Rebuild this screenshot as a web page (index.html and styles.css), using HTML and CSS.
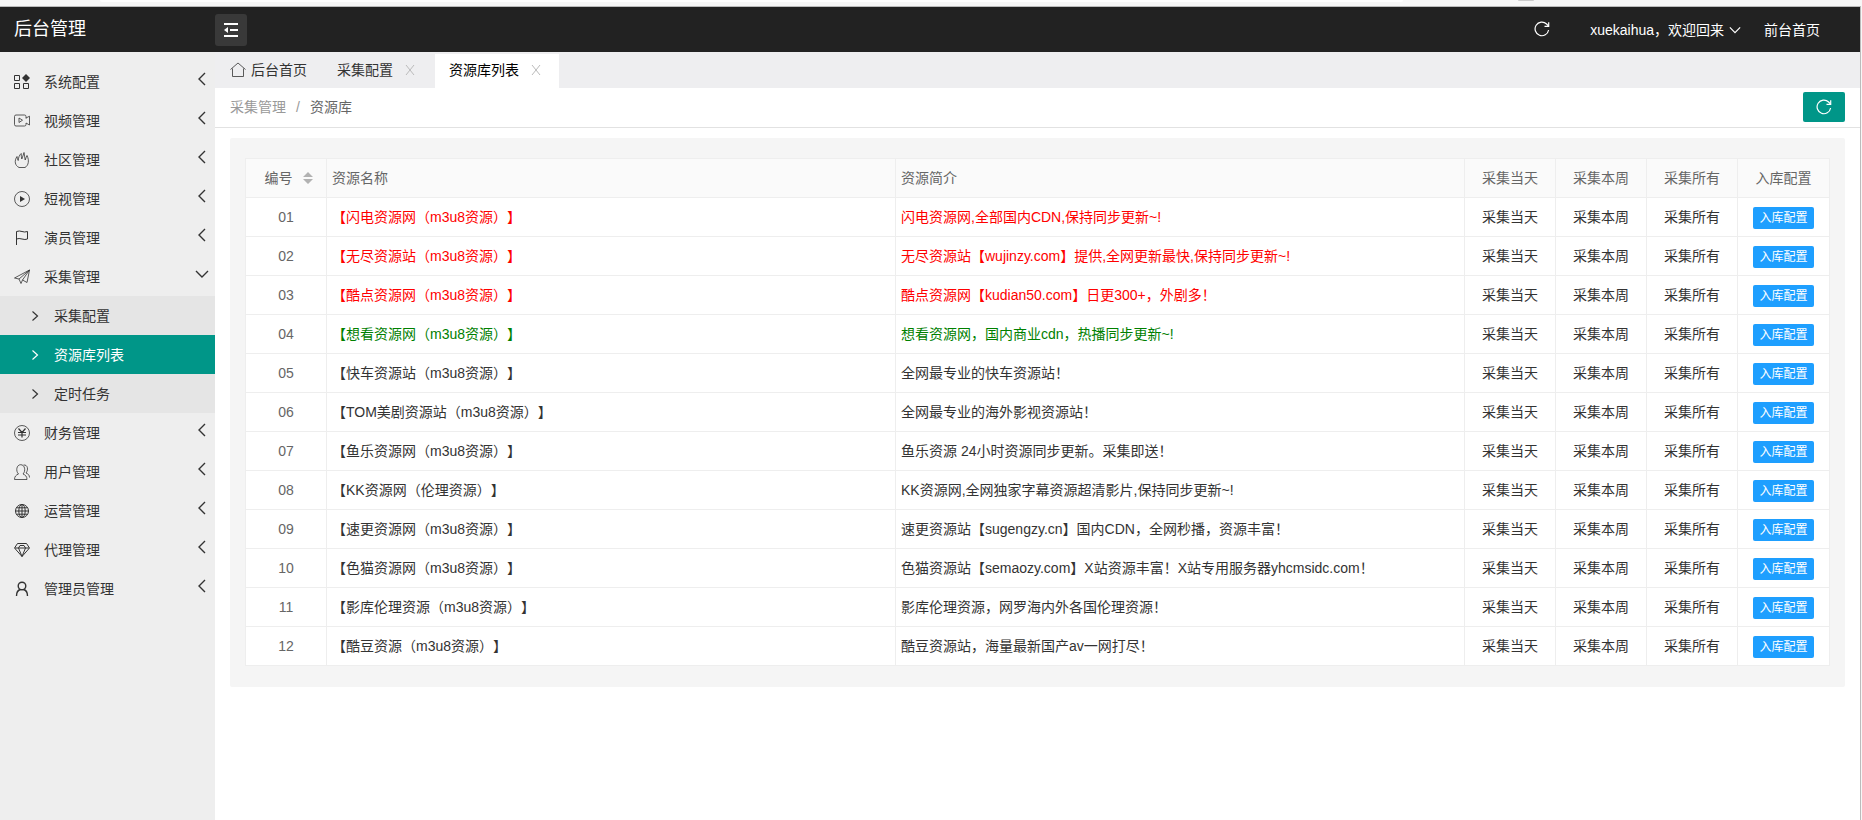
FILE: index.html
```html
<!DOCTYPE html>
<html lang="zh-CN">
<head>
<meta charset="utf-8">
<title>后台管理</title>
<meta name="viewport" content="width=device-width, initial-scale=1">
<link rel="stylesheet" href="styles.css">
</head>
<body>
<svg class="sprite" aria-hidden="true">
  <symbol id="left" viewBox="0 0 14 14"><path d="M10 1 4 7l6 6"/></symbol>
  <symbol id="right" viewBox="0 0 14 14"><path d="m4.500 2.500 5 4.500-5 4.500"/></symbol>
  <symbol id="down" viewBox="0 0 14 14"><path d="m1 4 6 6 6-6"/></symbol>
  <symbol id="close" viewBox="0 0 14 14"><path d="m3 2 8 10M11 2 3 12"/></symbol>
  <symbol id="refresh" viewBox="0 0 16 16"><path d="M14.600 9A6.800 6.800 0 1 1 12.600 3L14.500 5"/><path d="M14.700 1.200V5.300H10.500"/></symbol>
</svg>
<div class="window-strip"><div class="address"></div><div class="window-knob"></div></div>
<div class="frame">
  <header class="topbar">
    <h1 class="brand">后台管理</h1>
    <button class="toggle" type="button" aria-label="收起菜单">
      <svg class="icon" viewBox="0 0 16 16"><path stroke-width="2" d="M1 2h14M7 8h8M1 14h14"/><path class="solid" d="M1 8l4-3v6z"/></svg>
    </button>
    <nav class="usernav">
      <button class="plain reload" type="button" aria-label="刷新"><svg class="icon"><use href="#refresh"/></svg></button>
      <a class="user" href="#">xuekaihua，欢迎回来<svg class="caret"><use href="#down"/></svg></a>
      <a href="#">前台首页</a>
    </nav>
  </header>
  <div class="body">
    <nav class="sidebar">
      <a class="item" href="#"><svg class="icon" viewBox="0 0 16 16"><path d="M.500 1.500h5v5h-5zM.500 9.500h5v5h-5zM9.500 9.500h5v5h-5z"/><path class="solid" d="M12 0l4 4-4 4-4-4z"/></svg>系统配置<svg class="arrow"><use href="#left"/></svg></a>
      <a class="item" href="#"><svg class="icon thin" viewBox="0 0 16 16"><path d="M12 5.500V3.500Q12 2 10.500 2H2Q.500 2 .500 3.500v8Q.500 13 2 13h8.500q1.500 0 1.500-1.500V10M12 5l3.500-1.800v8.800L12 10M5 5v4.500L8.500 7.200z"/></svg>视频管理<svg class="arrow"><use href="#left"/></svg></a>
      <a class="item" href="#"><svg class="icon thin" viewBox="0 0 16 16"><path d="M5 15.500C1 13.500 0 9 3 4.500q.300 2.500 1.200 4C4.500 5 5.500 3 7.200 1.500q0 3 .600 5.500Q9 4 10 .500q.500 3.500 1.200 7.500.800-2.500 1.800-4.500c2.500 5 1.500 10-2 12z"/></svg>社区管理<svg class="arrow"><use href="#left"/></svg></a>
      <a class="item" href="#"><svg class="icon thin" viewBox="0 0 16 16"><circle cx="8" cy="8" r="7.500"/><path class="solid" d="M6 5v6l5-3z"/></svg>短视管理<svg class="arrow"><use href="#left"/></svg></a>
      <a class="item" href="#"><svg class="icon" viewBox="0 0 16 16"><path d="M2.500 15V1.500q3-1 5.500 0t5.500 0V9Q11 10 8 9t-5.500 0"/></svg>演员管理<svg class="arrow"><use href="#left"/></svg></a>
      <a class="item" href="#"><svg class="icon thin" viewBox="0 0 16 16"><path d="M.500 9 15.500 1 13 13.500 8.500 11 7 14.500 5 10zM15.500 1 5 10M15.500 1 8.500 11"/></svg>采集管理<svg class="arrow"><use href="#down"/></svg></a>
      <div class="submenu">
        <a class="subitem" href="#"><svg class="mark"><use href="#right"/></svg>采集配置</a>
        <a class="subitem current" href="#"><svg class="mark"><use href="#right"/></svg>资源库列表</a>
        <a class="subitem" href="#"><svg class="mark"><use href="#right"/></svg>定时任务</a>
      </div>
      <a class="item" href="#"><svg class="icon thin" viewBox="0 0 16 16"><circle cx="8" cy="8" r="7.500"/><path stroke-width="1.200" d="m4.500 3.500 3.500 4 3.500-4M8 7.500v5M4 7.500h8M4 10h8"/></svg>财务管理<svg class="arrow"><use href="#left"/></svg></a>
      <a class="item" href="#"><svg class="icon thin" viewBox="0 0 16 16"><path d="M.500 15.500c0-3 1.500-4.500 4-5.500C1.500 7 2.500.700 6.700.700S12 7 9 10c2.500 1 4 2.500 4 5.500zM9.500 1c4.500-.500 5 5 2.500 8 2 .800 3.500 2 3.500 4.500"/></svg>用户管理<svg class="arrow"><use href="#left"/></svg></a>
      <a class="item" href="#"><svg class="icon" viewBox="0 0 16 16"><circle cx="8" cy="8" r="6.500"/><ellipse cx="8" cy="8" rx="3.200" ry="6.500"/><path d="M8 1.500v13M1.500 8h13M2.500 4.800h11M2.500 11.200h11"/></svg>运营管理<svg class="arrow"><use href="#left"/></svg></a>
      <a class="item" href="#"><svg class="icon" viewBox="0 0 16 16"><path d="M3.500 1.500h9l3 4.500L8 14.500.500 6zM1 6h14M4.500 6 8 14.500 11.500 6M4.500 6 6 3.500h4L11.500 6"/></svg>代理管理<svg class="arrow"><use href="#left"/></svg></a>
      <a class="item" href="#"><svg class="icon bold" viewBox="0 0 16 16"><circle cx="8" cy="5" r="3.800"/><path d="M2.500 15c0-3.500 2-6 4-6.500M13.500 15c0-3.500-2-6-4-6.500"/></svg>管理员管理<svg class="arrow"><use href="#left"/></svg></a>
    </nav>
    <main class="main">
      <div class="tabs">
        <a class="tab home" href="#"><svg class="icon thin" viewBox="0 0 16 16"><path d="M.500 7.500 8 1l7.500 6.500M2.500 6.500v8h11v-8"/></svg>后台首页</a>
        <div class="tab"><a href="#">采集配置</a><button class="plain" type="button" aria-label="关闭采集配置"><svg class="close"><use href="#close"/></svg></button></div>
        <div class="tab active"><a href="#">资源库列表</a><button class="plain" type="button" aria-label="关闭资源库列表"><svg class="close"><use href="#close"/></svg></button></div>
      </div>
      <div class="crumbs">
        <a href="#">采集管理</a><span>/</span><strong>资源库</strong>
        <button class="refresh" type="button" aria-label="刷新列表"><svg class="icon"><use href="#refresh"/></svg></button>
      </div>
      <section class="panel">
        <table class="grid">
          <colgroup><col class="c-num"><col><col><col class="c-act"><col class="c-act"><col class="c-act"><col class="c-config"></colgroup>
          <thead>
            <tr><th><span class="sortable">编号<button class="plain" type="button" aria-label="排序"><svg class="sort" viewBox="0 0 10 12"><path d="M0 5l5-5 5 5zM0 7h10l-5 5z"/></svg></button></span></th><th class="text">资源名称</th><th class="text">资源简介</th><th>采集当天</th><th>采集本周</th><th>采集所有</th><th>入库配置</th></tr>
          </thead>
          <tbody>
            <tr class="red"><td>01</td><td class="text">【闪电资源网（m3u8资源）】</td><td class="text">闪电资源网,全部国内CDN,保持同步更新~!</td><td><a href="#">采集当天</a></td><td><a href="#">采集本周</a></td><td><a href="#">采集所有</a></td><td class="op"><button class="config" type="button">入库配置</button></td></tr>
            <tr class="red"><td>02</td><td class="text">【无尽资源站（m3u8资源）】</td><td class="text">无尽资源站【wujinzy.com】提供,全网更新最快,保持同步更新~!</td><td><a href="#">采集当天</a></td><td><a href="#">采集本周</a></td><td><a href="#">采集所有</a></td><td class="op"><button class="config" type="button">入库配置</button></td></tr>
            <tr class="red"><td>03</td><td class="text">【酷点资源网（m3u8资源）】</td><td class="text">酷点资源网【kudian50.com】日更300+，外剧多！</td><td><a href="#">采集当天</a></td><td><a href="#">采集本周</a></td><td><a href="#">采集所有</a></td><td class="op"><button class="config" type="button">入库配置</button></td></tr>
            <tr class="green"><td>04</td><td class="text">【想看资源网（m3u8资源）】</td><td class="text">想看资源网，国内商业cdn，热播同步更新~!</td><td><a href="#">采集当天</a></td><td><a href="#">采集本周</a></td><td><a href="#">采集所有</a></td><td class="op"><button class="config" type="button">入库配置</button></td></tr>
            <tr><td>05</td><td class="text">【快车资源站（m3u8资源）】</td><td class="text">全网最专业的快车资源站！</td><td><a href="#">采集当天</a></td><td><a href="#">采集本周</a></td><td><a href="#">采集所有</a></td><td class="op"><button class="config" type="button">入库配置</button></td></tr>
            <tr><td>06</td><td class="text">【TOM美剧资源站（m3u8资源）】</td><td class="text">全网最专业的海外影视资源站！</td><td><a href="#">采集当天</a></td><td><a href="#">采集本周</a></td><td><a href="#">采集所有</a></td><td class="op"><button class="config" type="button">入库配置</button></td></tr>
            <tr><td>07</td><td class="text">【鱼乐资源网（m3u8资源）】</td><td class="text">鱼乐资源 24小时资源同步更新。采集即送！</td><td><a href="#">采集当天</a></td><td><a href="#">采集本周</a></td><td><a href="#">采集所有</a></td><td class="op"><button class="config" type="button">入库配置</button></td></tr>
            <tr><td>08</td><td class="text">【KK资源网（伦理资源）】</td><td class="text">KK资源网,全网独家字幕资源超清影片,保持同步更新~!</td><td><a href="#">采集当天</a></td><td><a href="#">采集本周</a></td><td><a href="#">采集所有</a></td><td class="op"><button class="config" type="button">入库配置</button></td></tr>
            <tr><td>09</td><td class="text">【速更资源网（m3u8资源）】</td><td class="text">速更资源站【sugengzy.cn】国内CDN，全网秒播，资源丰富！</td><td><a href="#">采集当天</a></td><td><a href="#">采集本周</a></td><td><a href="#">采集所有</a></td><td class="op"><button class="config" type="button">入库配置</button></td></tr>
            <tr><td>10</td><td class="text">【色猫资源网（m3u8资源）】</td><td class="text">色猫资源站【semaozy.com】X站资源丰富！X站专用服务器yhcmsidc.com！</td><td><a href="#">采集当天</a></td><td><a href="#">采集本周</a></td><td><a href="#">采集所有</a></td><td class="op"><button class="config" type="button">入库配置</button></td></tr>
            <tr><td>11</td><td class="text">【影库伦理资源（m3u8资源）】</td><td class="text">影库伦理资源，网罗海内外各国伦理资源！</td><td><a href="#">采集当天</a></td><td><a href="#">采集本周</a></td><td><a href="#">采集所有</a></td><td class="op"><button class="config" type="button">入库配置</button></td></tr>
            <tr><td>12</td><td class="text">【酷豆资源（m3u8资源）】</td><td class="text">酷豆资源站，海量最新国产av一网打尽！</td><td><a href="#">采集当天</a></td><td><a href="#">采集本周</a></td><td><a href="#">采集所有</a></td><td class="op"><button class="config" type="button">入库配置</button></td></tr>
          </tbody>
        </table>
      </section>
    </main>
  </div>
</div>
</body>
</html>
```
FILE: styles.css
```css
* { box-sizing: border-box; }

body {
  margin: 0;
  min-height: 100vh;
  display: flex;
  flex-direction: column;
  background: #f7f7f7;
  color: #333;
  font: 14px/20px "Liberation Sans", Arial, "Noto Sans CJK SC", sans-serif;
  text-spacing-trim: space-all;
}

a { color: inherit; text-decoration: none; }
button { font: inherit; cursor: pointer; }
svg { flex: none; fill: none; stroke: currentColor; }
.sprite { display: none; }
.solid { fill: currentColor; stroke: none; }
.icon { width: 16px; height: 16px; }
.thin { stroke-width: 0.8; }
.bold { stroke-width: 1.4; }
.plain { display: flex; padding: 0; border: 0; background: none; color: inherit; }

.window-strip { display: flex; height: 6px; overflow: hidden; }
.address { width: 70%; height: 2px; margin-left: 100px; background: #fff; border-radius: 0 0 8px 8px; }
.window-knob { width: 16px; height: 1px; margin-left: 115px; background: #ccc; border-radius: 0 0 8px 8px; }

.frame {
  flex: 1;
  display: flex;
  flex-direction: column;
  margin-right: 1px;
  border: solid #bbb;
  border-width: 1px 1px 0 0;
  background: #fff;
}

.topbar { display: flex; align-items: center; height: 45px; background: #222; color: #fff; }
.brand { width: 215px; margin: 0; padding: 0 0 2px 14px; font-size: 18px; line-height: 24px; font-weight: 400; }
.toggle {
  display: grid;
  place-items: center;
  width: 32px;
  height: 32px;
  padding: 0;
  border: 0;
  border-radius: 3px;
  background: #393939;
  color: #fff;
}
.usernav { display: flex; align-items: center; margin-left: auto; padding-right: 40px; }
.reload { margin: 0 40px 2px 0; stroke-width: 1.2; }
.user { display: flex; align-items: center; gap: 5px; margin-right: 23px; }
.caret { width: 12px; height: 12px; stroke-width: 1.4; }

.body { flex: 1; display: flex; }
.sidebar { flex: none; width: 215px; padding-top: 10px; background: #eee; }
.item, .subitem { display: flex; align-items: center; height: 39px; }
.item { gap: 14px; padding: 0 6px 0 14px; }
.item .arrow { width: 14px; height: 14px; margin: 0 0 5px auto; stroke-width: 1.4; }
.submenu { background: #e5e5e5; }
.subitem { gap: 12px; padding-left: 28px; }
.mark { width: 14px; height: 14px; stroke-width: 1.2; }
.current { background: #009688; color: #fff; }

.main { flex: 1; min-width: 0; }
.tabs { display: flex; align-items: flex-end; height: 36px; background: #eeeef0; }
.tab { display: flex; align-items: center; gap: 10px; height: 34px; padding: 0 16px 2px 14px; }
.home { gap: 5px; padding: 0 16px 2px 15px; }
.tab + .active { margin-left: 2px; }
.active { background: #fff; color: #000; }
.close { width: 14px; height: 14px; color: #bbb; }

.crumbs {
  display: flex;
  align-items: center;
  gap: 10px;
  height: 40px;
  padding: 0 15px 2px;
  border-bottom: 1px solid #e2e2e2;
  color: #999;
}
.crumbs strong { color: #666; font-weight: 400; }
.refresh {
  display: grid;
  place-items: center;
  width: 42px;
  height: 30px;
  margin-left: auto;
  padding: 0;
  border: 0;
  border-radius: 2px;
  background: #009688;
  color: #fff;
  stroke-width: 1.2;
}

.panel { margin: 10px 15px; padding: 20px 15px 21px; background: #f5f5f5; border-radius: 2px; }
.grid { width: 100%; border-collapse: collapse; table-layout: fixed; background: #fff; }
.c-num { width: 81px; }
.c-act { width: 91px; }
.c-config { width: 92px; }
.grid th, .grid td { height: 39px; padding: 0; border: 1px solid #eee; text-align: center; font-weight: 400; }
.grid th { background: #fafafa; color: #666; }
.grid td:first-child { color: #666; }
.grid .text { padding: 0 5px; text-align: left; }
.grid .op { padding-top: 2px; }
.red .text { color: #f00; }
.green .text { color: #008000; }
.sortable { display: flex; justify-content: center; align-items: center; gap: 10px; padding-left: 5px; }
.sort { width: 10px; height: 12px; fill: #b2b2b2; stroke: none; }
.config {
  display: block;
  height: 22px;
  margin: 0 auto;
  padding: 0 6px;
  border: 0;
  border-radius: 2px;
  background: #1e9fff;
  color: #fff;
  font-size: 12px;
  line-height: 22px;
}
```
